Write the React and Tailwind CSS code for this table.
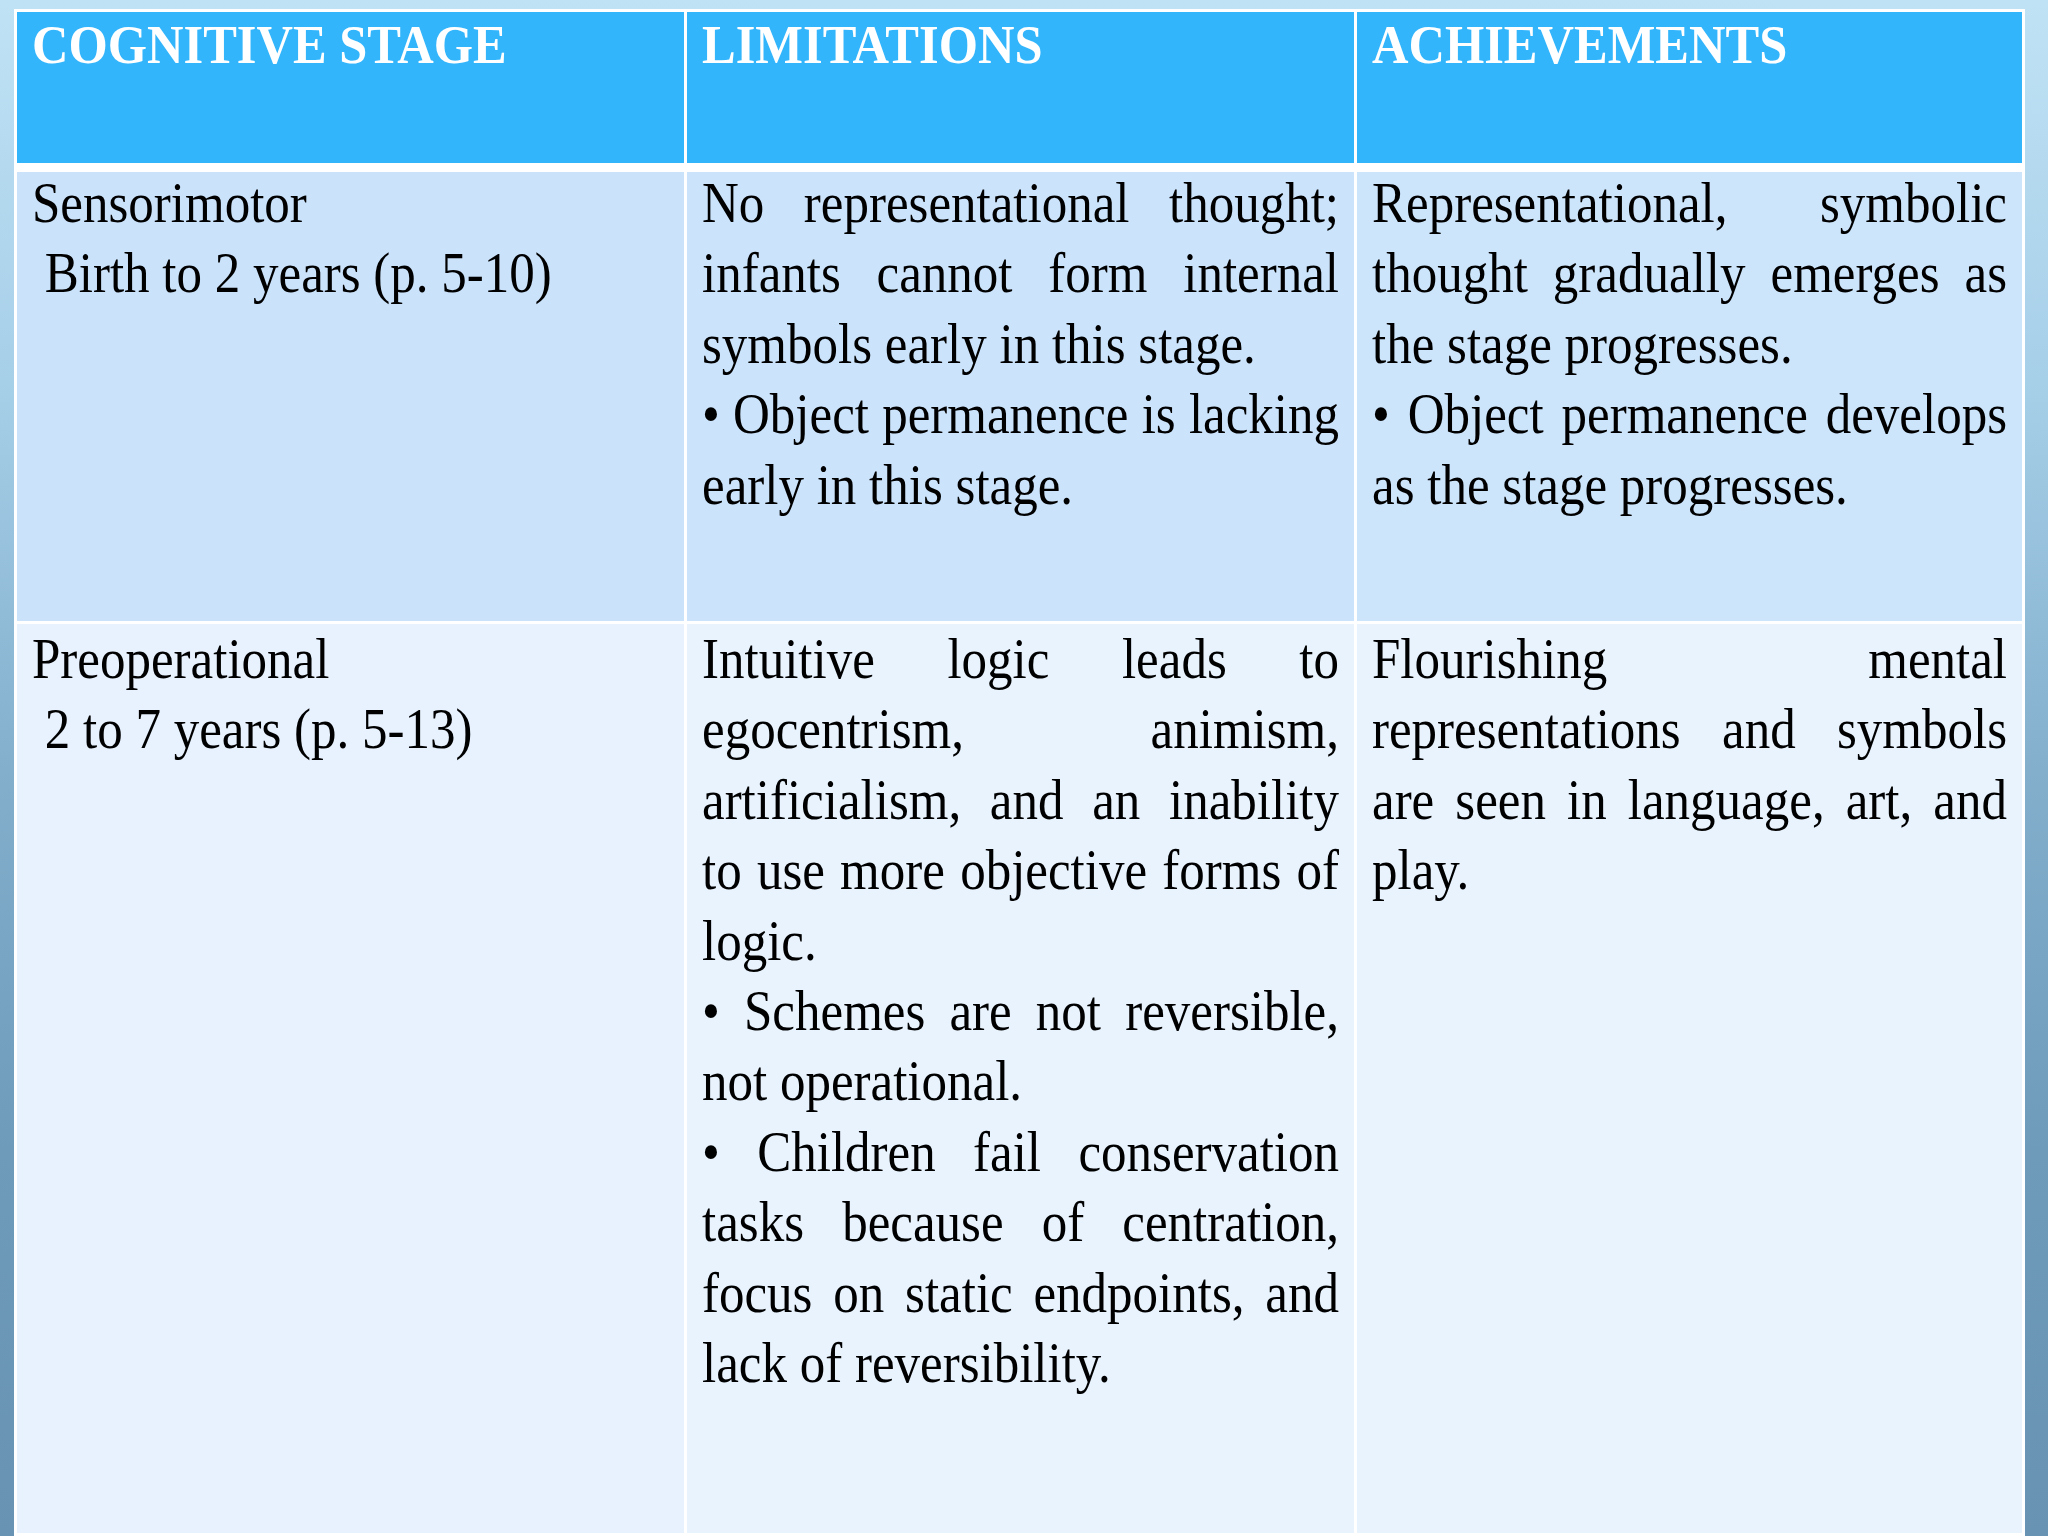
import React from "react";

function Cell({ children, className = "", shift = "mt-[-4px]" }) {
  return (
    <div className={"overflow-hidden px-[15px] " + className}>
      <div className={"origin-top scale-y-[1.1] text-[51px] leading-[64px] text-black text-justify " + shift}>
        {children}
      </div>
    </div>
  );
}

function HeadCell({ children }) {
  return (
    <div className="overflow-hidden bg-[#33b5fc] px-[15px]">
      <div className="mt-[-3px] origin-top scale-y-[1.1] text-[50.5px] font-bold leading-[64px] text-white">
        {children}
      </div>
    </div>
  );
}

export default function App() {
  return (
    <div className="h-[1536px] w-[2048px] overflow-hidden bg-[linear-gradient(to_bottom,#c0e2f5_0%,#a6cfe8_25%,#83afcd_50%,#6f9bbb_75%,#6893b3_100%)] pl-[14px] pt-[9px] font-['Liberation_Serif','Times_New_Roman',serif]">
      <div className="flex h-[1527px] w-[2011px] flex-col bg-white p-[3px]">
        <div className="grid h-[151px] grid-cols-[667px_667px_665px] gap-x-[3px]">
          <HeadCell>COGNITIVE STAGE</HeadCell>
          <HeadCell>LIMITATIONS</HeadCell>
          <HeadCell>ACHIEVEMENTS</HeadCell>
        </div>
        <div className="mt-[9px] grid h-[449px] grid-cols-[667px_667px_665px] gap-x-[3px]">
          <Cell className="bg-[#cae2fa]">
            <p className="text-left">Sensorimotor</p>
            <p className="whitespace-pre text-left"> Birth to 2 years (p. 5-10)</p>
          </Cell>
          <Cell className="bg-[#cce4fb]">
            <p>No representational thought; infants cannot form internal symbols early in this stage.</p>
            <p>• Object permanence is lacking early in this stage.</p>
          </Cell>
          <Cell className="bg-[#cde5fb]">
            <p>Representational, symbolic thought gradually emerges as the stage progresses.</p>
            <p>• Object permanence develops as the stage progresses.</p>
          </Cell>
        </div>
        <div className="mt-[3px] grid h-[909px] grid-cols-[667px_667px_665px] gap-x-[3px]">
          <Cell className="bg-[#e7f2fe]" shift="mt-0">
            <p className="text-left">Preoperational</p>
            <p className="whitespace-pre text-left"> 2 to 7 years (p. 5-13)</p>
          </Cell>
          <Cell className="bg-[#e8f3fe]" shift="mt-0">
            <p>Intuitive logic leads to egocentrism, animism, artificialism, and an inability to use more objective forms of logic.</p>
            <p>• Schemes are not reversible, not operational.</p>
            <p>• Children fail conservation tasks because of centration, focus on static endpoints, and lack of reversibility.</p>
          </Cell>
          <Cell className="bg-[#e8f3fe]" shift="mt-0">
            <p>Flourishing mental representations and symbols are seen in language, art, and play.</p>
          </Cell>
        </div>
      </div>
    </div>
  );
}
